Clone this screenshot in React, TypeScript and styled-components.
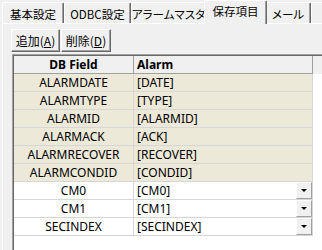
import React from 'react'
import styled, { createGlobalStyle } from 'styled-components'

const GlobalStyle = createGlobalStyle`
  html, body {
    margin: 0;
    padding: 0;
    background: #f0f0f0;
  }
  body {
    font-family: "Noto Sans", "Noto Sans CJK JP", sans-serif;
    font-size: 12px;
    color: #000;
  }
`

const Window = styled.div`
  width: 322px;
  height: 250px;
  overflow: hidden;
  background: #f0f0f0;
  display: flex;
  flex-direction: column;
`

const TabStrip = styled.div`
  display: flex;
  align-items: flex-end;
  height: 23px;
  padding-left: 2px;
  position: relative;
  z-index: 1;
`

const Tab = styled.div<{ $width: number; $active?: boolean }>`
  box-sizing: border-box;
  flex: none;
  width: ${(p) => p.$width}px;
  height: ${(p) => (p.$active ? 24 : 21)}px;
  margin: ${(p) => (p.$active ? '0 -2px -1px' : '0')};
  padding-top: ${(p) => (p.$active ? 3 : 4)}px;
  position: relative;
  z-index: ${(p) => (p.$active ? 2 : 1)};
  background: #f0f0f0;
  border-top: 1px solid #fff;
  border-left: 1px solid #fff;
  border-right: 1px solid #696969;
  box-shadow: inset -1px 0 0 #a0a0a0;
  border-radius: 2px 2px 0 0;
  font-family: "Noto Sans CJK JP", sans-serif;
  font-feature-settings: "palt";
  font-size: 11.5px;
  line-height: 15px;
  text-align: center;
  white-space: nowrap;
  overflow: hidden;
`

const Panel = styled.div`
  flex: 1;
  display: flex;
  flex-direction: column;
  margin-left: 2px;
  padding: 5px 0 0 8px;
  border-top: 1px solid #fff;
  border-left: 1px solid #fff;
`

const ButtonRow = styled.div`
  display: flex;
  gap: 1px;
`

const Button = styled.button<{ $width: number }>`
  box-sizing: border-box;
  width: ${(p) => p.$width}px;
  height: 23px;
  padding: 0;
  background: #f0f0f0;
  border: 1px solid;
  border-color: #fff #696969 #696969 #fff;
  box-shadow: inset -1px -1px 0 #a0a0a0;
  font-family: "Noto Sans CJK JP", sans-serif;
  font-size: 12px;
  color: #000;

  u {
    text-decoration: underline;
  }
`

const GridFrame = styled.div`
  flex: 1;
  width: 320px;
  margin: 2px 0 0 1px;
  padding: 1px 0 0 1px;
  background: #fff;
  border-top: 1px solid #a0a0a0;
  border-left: 1px solid #a0a0a0;
  box-shadow: inset 1px 1px 0 #696969;
`

const Table = styled.div`
  display: grid;
  grid-template-columns: 120px 179px 1fr;
  grid-auto-rows: 18px;
`

const HeaderCell = styled.div<{ $align?: 'center' | 'left'; $filler?: boolean }>`
  box-sizing: border-box;
  display: flex;
  align-items: center;
  justify-content: ${(p) => (p.$align === 'left' ? 'flex-start' : 'center')};
  padding-left: ${(p) => (p.$align === 'left' ? 3 : 0)}px;
  background: #f0f0f0;
  border-right: ${(p) => (p.$filler ? 'none' : '1px solid #a0a0a0')};
  border-bottom: ${(p) => (p.$filler ? 'none' : '1px solid #a0a0a0')};
  font-weight: bold;
`

const Cell = styled.div<{ $beige?: boolean; $align?: 'center' | 'left' }>`
  box-sizing: border-box;
  display: flex;
  align-items: center;
  justify-content: ${(p) => (p.$align === 'left' ? 'flex-start' : 'center')};
  padding-left: ${(p) => (p.$align === 'left' ? 3 : 0)}px;
  background: ${(p) => (p.$beige ? '#ece9d8' : '#fff')};
  border-right: 1px solid #d6d6d6;
  border-bottom: 1px solid #d6d6d6;
  white-space: nowrap;
`

const CellText = styled.span`
  flex: 1;
`

const FillerCell = styled.div`
  background: #fff;
`

const DropButton = styled.div`
  box-sizing: border-box;
  width: 16px;
  height: 17px;
  display: flex;
  align-items: center;
  justify-content: center;
  background: #f0f0f0;
  border: 1px solid;
  border-color: #fff #a0a0a0 #a0a0a0 #fff;

  &::after {
    content: '';
    width: 0;
    height: 0;
    border-left: 3px solid transparent;
    border-right: 3px solid transparent;
    border-top: 3px solid #000;
  }
`

type Row = { field: string; alarm: string; fixed: boolean }

const ROWS: Row[] = [
  { field: 'ALARMDATE', alarm: '[DATE]', fixed: true },
  { field: 'ALARMTYPE', alarm: '[TYPE]', fixed: true },
  { field: 'ALARMID', alarm: '[ALARMID]', fixed: true },
  { field: 'ALARMACK', alarm: '[ACK]', fixed: true },
  { field: 'ALARMRECOVER', alarm: '[RECOVER]', fixed: true },
  { field: 'ALARMCONDID', alarm: '[CONDID]', fixed: true },
  { field: 'CM0', alarm: '[CM0]', fixed: false },
  { field: 'CM1', alarm: '[CM1]', fixed: false },
  { field: 'SECINDEX', alarm: '[SECINDEX]', fixed: false },
]

const TABS = [
  { label: '基本設定', width: 62 },
  { label: 'ODBC設定', width: 67 },
  { label: 'アラームマスタ', width: 75 },
  { label: '保存項目', width: 63, active: true },
  { label: 'メール', width: 46 },
  { label: '共通', width: 60 },
]

export default function App() {
  return (
    <>
      <GlobalStyle />
      <Window>
        <TabStrip>
          {TABS.map((t) => (
            <Tab key={t.label} $width={t.width} $active={t.active}>
              {t.label}
            </Tab>
          ))}
        </TabStrip>
        <Panel>
          <ButtonRow>
            <Button $width={49}>
              追加(<u>A</u>)
            </Button>
            <Button $width={50}>
              削除(<u>D</u>)
            </Button>
          </ButtonRow>
          <GridFrame>
            <Table>
              <HeaderCell>DB Field</HeaderCell>
              <HeaderCell $align="left">Alarm</HeaderCell>
              <HeaderCell $filler />
              {ROWS.map((r) => (
                <React.Fragment key={r.field}>
                  <Cell $beige={r.fixed}>{r.field}</Cell>
                  <Cell $beige={r.fixed} $align="left">
                    <CellText>{r.alarm}</CellText>
                    {!r.fixed && <DropButton />}
                  </Cell>
                  <FillerCell />
                </React.Fragment>
              ))}
            </Table>
          </GridFrame>
        </Panel>
      </Window>
    </>
  )
}
